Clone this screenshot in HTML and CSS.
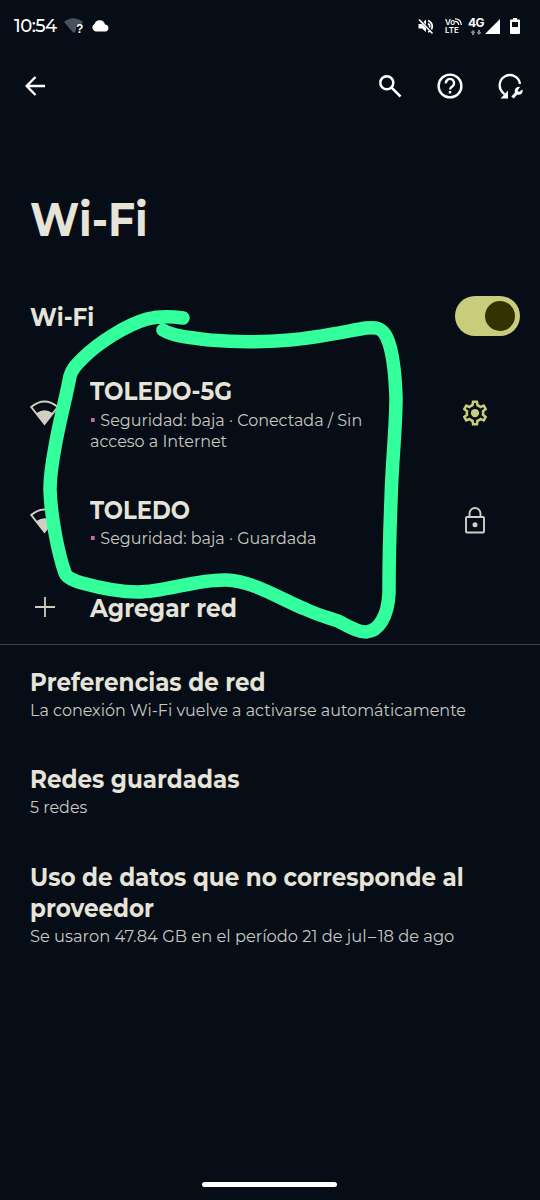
FILE: index.html
```html
<!DOCTYPE html>
<html lang="es">
<head>
<meta charset="utf-8">
<title>Wi-Fi</title>
<link rel="stylesheet" href="styles.css">
</head>
<body>
<div class="screen">
  <header class="status">
    <span class="clock">10:54</span>
    <svg class="status-wifi" width="20" height="17" viewBox="0 0 20 17"><path d="M0 4Q9-3.500 19 4L17 7H12V13L9.500 15Z" fill="#4b515b"/><text class="status-q" x="12" y="15">?</text></svg>
    <svg class="status-cloud" width="19" height="12" viewBox="0 0 19 12"><path d="M4.500 11.500A4 4 0 0 1 3.500 4 5.500 5.500 0 0 1 14 4.500 3.600 3.600 0 0 1 15 11.500Z" fill="#fff"/></svg>
    <span class="spacer"></span>
    <svg class="status-mute" width="16" height="17" viewBox="0 0 16 17" fill="none" stroke="#fff" stroke-width="1.700"><path d="M1 1.500 14.500 15.500"/><path d="M.5 6H4L8 10V14L4 10.500H.5Z" fill="#fff" stroke="none"/><path d="M5.500 4 8 1.500V7Z" fill="#fff" stroke="none"/><path d="M10 2.500Q16 5.500 13.500 11.500M10 5.500Q12.500 7 11.500 9.500M10 14L12 13"/></svg>
    <div class="volte"><span>Vo<svg width="7" height="7" viewBox="0 0 7 7" fill="none" stroke="#fff" stroke-width="1.200"><path d="M0 .8Q6 .8 6.300 7M0 3.400Q3.400 3.400 3.700 7"/></svg></span><span>LTE</span></div>
    <div class="network"><b>4G</b><svg width="10" height="5" viewBox="0 0 10 5" fill="#858a91"><path d="M2 0 4 2V3H3V5H1V3H0V2ZM8 5 6 3V2H7V0H9V2H10V3Z"/></svg></div>
    <svg class="signal" width="15" height="15" viewBox="0 0 15 15"><path d="M0 15 15 0V15Z" fill="#fff"/></svg>
    <svg class="battery" width="10" height="16" viewBox="0 0 10 16"><path d="M3 0H7V1.500H9Q10 1.500 10 2.500V15Q10 16 9 16H1Q0 16 0 15V2.500Q0 1.500 1 1.500H3Z" fill="#fff"/><path d="M2 4H8V9H2Z" fill="#070d17"/></svg>
  </header>

  <nav class="toolbar">
    <svg class="back" width="21" height="20" viewBox="0 0 21 20" fill="none" stroke="#fff" stroke-width="2.400"><path d="M20 10H2M10.500 1 1.700 10 10.500 19"/></svg>
    <span class="spacer"></span>
    <svg class="tool" width="24" height="24" viewBox="0 0 24 24" fill="none" stroke="#fff" stroke-width="2.500"><circle cx="8.800" cy="8.800" r="6.500"/><path d="M13.300 13.300 22.500 22.500"/></svg>
    <svg class="tool" width="26" height="26" viewBox="0 0 26 26" fill="none" stroke="#fff" stroke-width="2.400"><circle cx="13" cy="13" r="11.400"/><path d="M8.900 10.400A4.100 4.100 0 1 1 15.800 13Q13 14.800 13 16.500"/><path d="M13 18V20.400"/></svg>
    <svg class="tool" width="26" height="26" viewBox="0 0 26 26" fill="none" stroke="#fff" stroke-width="2.300"><path d="M22 11A10.200 10.200 0 1 0 5 19.800L6.500 21.300"/><path d="M10 17.500V25.500H2.500Z" fill="#fff" stroke="none"/><path d="M14.500 24.500 19 19.500" stroke-width="3.200"/><path d="M22 14A4 4 0 1 0 24.500 16.500L21 19 19.600 17.500Z" fill="#fff" stroke="none"/></svg>
  </nav>

  <h1>Wi-Fi</h1>

  <section class="main-toggle">
    <span class="title">Wi-Fi</span>
    <span class="switch"><i></i></span>
  </section>

  <section class="networks">
    <div class="network-row first">
      <svg class="wifi" width="29" height="26" viewBox="0 0 29 26"><path d="M1.200 7Q14.500-4 27.800 7L14.500 24Z" fill="none" stroke="#d0cfc2" stroke-width="2"/><path d="M6.500 13Q14.500 7.500 22.500 13L14.500 24.500Z" fill="#d0cfc2"/></svg>
      <div class="info">
        <div class="title">TOLEDO-5G</div>
        <div class="sub"><i class="dot"></i>Seguridad: baja · Conectada / Sin<br>acceso a Internet</div>
      </div>
      <svg class="gear" width="30" height="30" viewBox="0 0 24 24" fill="#c9cc7b"><path d="M19.430 12.980c.04-.32.07-.64.07-.98 0-.34-.03-.66-.07-.98l2.110-1.650c.19-.15.24-.42.12-.64l-2-3.460c-.09-.16-.26-.25-.44-.25-.06 0-.12.01-.17.03l-2.490 1c-.52-.4-1.080-.73-1.690-.98l-.38-2.650C14.460 2.180 14.250 2 14 2h-4c-.25 0-.46.18-.49.42l-.38 2.650c-.61.25-1.170.59-1.690.98l-2.490-1c-.06-.02-.12-.03-.18-.03-.17 0-.34.09-.43.25l-2 3.460c-.13.22-.07.49.12.64l2.110 1.650c-.04.32-.07.65-.07.98 0 .33.03.66.07.98l-2.110 1.650c-.19.15-.24.42-.12.64l2 3.460c.09.16.26.25.44.25.06 0 .12-.01.17-.03l2.490-1c.52.4 1.080.73 1.690.98l.38 2.650c.03.24.24.42.49.42h4c.25 0 .46-.18.49-.42l.38-2.650c.61-.25 1.170-.59 1.690-.98l2.490 1c.06.02.12.03.18.03.17 0 .34-.09.43-.25l2-3.460c.12-.22.07-.49-.12-.64l-2.110-1.650zm-1.980-1.710c.04.31.05.52.05.73 0 .21-.02.43-.05.73l-.14 1.130.89.7 1.080.84-.7 1.210-1.270-.51-1.040-.42-.9.68c-.43.32-.84.56-1.250.73l-1.060.43-.16 1.130-.2 1.350h-1.400l-.19-1.350-.16-1.130-1.060-.43c-.43-.18-.83-.41-1.230-.71l-.91-.7-1.060.43-1.270.51-.7-1.210 1.080-.84.89-.7-.14-1.130c-.03-.31-.05-.54-.05-.74s.02-.43.05-.73l.14-1.130-.89-.7-1.080-.84.7-1.210 1.270.51 1.040.42.9-.68c.43-.32.84-.56 1.250-.73l1.060-.43.16-1.130.2-1.350h1.390l.19 1.350.16 1.130 1.060.43c.43.18.83.41 1.230.71l.91.7 1.060-.43 1.270-.51.7 1.210-1.070.85-.89.7.14 1.130z"/><circle cx="12" cy="12" r="3.300"/></svg>
    </div>
    <div class="network-row second">
      <svg class="wifi" width="29" height="26" viewBox="0 0 29 26"><path d="M1.200 7Q14.500-4 27.800 7L14.500 24Z" fill="none" stroke="#d0cfc2" stroke-width="2"/><path d="M6.500 13Q14.500 7.500 22.500 13L14.500 24.500Z" fill="#d0cfc2"/></svg>
      <div class="info">
        <div class="title caps">TOLEDO</div>
        <div class="sub"><i class="dot"></i>Seguridad: baja · Guardada</div>
      </div>
      <svg class="lock" width="20" height="27" viewBox="0 0 20 27" fill="none" stroke="#cfcfc6" stroke-width="1.900"><rect x="1" y="10" width="18" height="15.500" rx="1"/><path d="M4.500 10V6.500A5.500 5.500 0 0 1 15.500 6.500V10"/><circle cx="10" cy="17.700" r="2.500" fill="#cfcfc6" stroke="none"/></svg>
    </div>
    <div class="network-row add">
      <svg class="plus" width="20" height="20" viewBox="0 0 20 20" stroke="#cfcebb" stroke-width="1.800"><path d="M10 0V20M0 10H20"/></svg>
      <div class="title add-title">Agregar red</div>
    </div>
  </section>

  <section class="prefs">
    <div class="pref"><div class="title">Preferencias de red</div><div class="sub">La conexión Wi-Fi vuelve a activarse automáticamente</div></div>
    <div class="pref"><div class="title">Redes guardadas</div><div class="sub">5 redes</div></div>
    <div class="pref"><div class="title">Uso de datos que no corresponde al<br>proveedor</div><div class="sub usage">Se usaron 47.84 GB en el período 21 de jul<span class="dash">–</span>18 de ago</div></div>
  </section>

  <div class="home-bar"></div>

  <svg class="scribble" width="540" height="1200" viewBox="0 0 540 1200"><path d="M183 318C169 316 155 317 147 319C126 325 98 343 83 358C76 365 72 369 70 376C66 398 59 423 55 447C52 463 50 476 50 490C51 517 58 553 65 573C67 578 75 581 82 583C100 588 120 592 138 592C165 592 197 579 226 580C254 581 282 600 305 609C320 616 330 618 338 621C348 626 357 632 366 632C379 631 388 616 389 593C389 568 390 525 391 500C392 460 396 430 396 397C395 370 392 349 387 338C382 327 375 327 366 328C343 332 315 338 290 340C265 342 232 342 210 340C193 338 175 337 163 330" fill="none" stroke="#33ff9c" stroke-width="13.500" stroke-linecap="round" stroke-linejoin="round"/></svg>
</div>
</body>
</html>
```
FILE: styles.css
```css
* { box-sizing: border-box; }
body { margin: 0; background: #070d17; }
.screen {
  position: relative;
  display: flex;
  flex-direction: column;
  width: 540px;
  height: 1200px;
  overflow: hidden;
  background: #070d17;
  color: #e6e4d9;
  font-family: Montserrat, Inter, "Liberation Sans", sans-serif;
}
svg { display: block; flex: none; }
.spacer { flex: 1; }

.status { display: flex; height: 52px; padding: 0 20px 0 14px; align-items: center; color: #fff; }
.clock { width: 44px; font-size: 18px; font-weight: 500; letter-spacing: -0.5px; white-space: nowrap; }
.status-wifi { margin-left: 6px; }
.status-q { font: 700 12px "Liberation Sans", sans-serif; fill: #fff; }
.status-cloud { margin-left: 7px; }
.status-mute { margin-right: 11px; }
.volte { display: flex; flex-direction: column; width: 18px; font: 600 8px/8px Inter, sans-serif; }
.volte span { display: flex; }
.network { display: flex; flex-direction: column; align-items: center; width: 16px; margin-left: 5px; gap: 2px; }
.network b { font: 700 12px/11px Inter, sans-serif; letter-spacing: -0.5px; }
.signal { margin-left: 1px; }
.battery { margin-left: 10px; }

.toolbar { display: flex; height: 68px; padding: 0 16px 0 25px; align-items: center; }
.tool { margin-left: 35px; }

/* Text is slightly condensed horizontally from its left edge */
h1, .title, .sub { transform-origin: 0 50%; white-space: nowrap; }
h1 { height: 58px; margin: 71px 0 0 30px; font-size: 47px; line-height: 58px; font-weight: 700; transform: scaleX(0.9); }
.title { font-size: 25px; line-height: 31px; font-weight: 700; transform: scaleX(0.923); }
.caps { transform: scaleX(0.91); }
.add-title { transform: scaleX(0.935); }
.sub { font-size: 17px; line-height: 21px; color: #c8c8c0; transform: scaleX(0.94); }
.usage { transform: scaleX(0.958); }
.dash { margin: 0 1.5px; }

.main-toggle { display: flex; height: 50px; margin-top: 42px; padding: 0 20px 0 30px; align-items: center; justify-content: space-between; }
.main-toggle .title { padding-top: 2px; }
.switch { display: flex; width: 65px; height: 40px; padding: 5px; border-radius: 20px; background: #c9cc7b; justify-content: flex-end; }
.switch i { width: 30px; height: 30px; border-radius: 50%; background: #313300; }

.networks { height: 304px; padding-top: 35px; border-bottom: 1px solid #3c4043; }
.network-row { display: grid; grid-template-columns: 60px 1fr 78px; padding-left: 30px; align-items: start; }
.first { height: 119px; }
.second { height: 98px; }
.info { display: grid; gap: 3px; }
.second .info { gap: 2px; }
.wifi { margin-top: 24px; }
.second .wifi { margin-top: 13px; }
.dot { display: inline-block; width: 4px; height: 4px; margin: 0 6px 4px 1px; background: #c56a9a; }
.gear { margin: 22px 0 0 -2px; }
.lock { margin: 12px 0 0 3px; }
.plus { margin: 4px 0 0 5px; }

.prefs { display: grid; gap: 43px; margin-top: 22px; padding-left: 30px; }
.pref { display: grid; gap: 2px; }
.pref:last-child { padding-top: 1px; }

.home-bar { width: 135px; height: 5px; margin: auto 0 13px 202px; border-radius: 3px; background: #fff; }
.scribble { position: absolute; inset: 0; pointer-events: none; }
```
